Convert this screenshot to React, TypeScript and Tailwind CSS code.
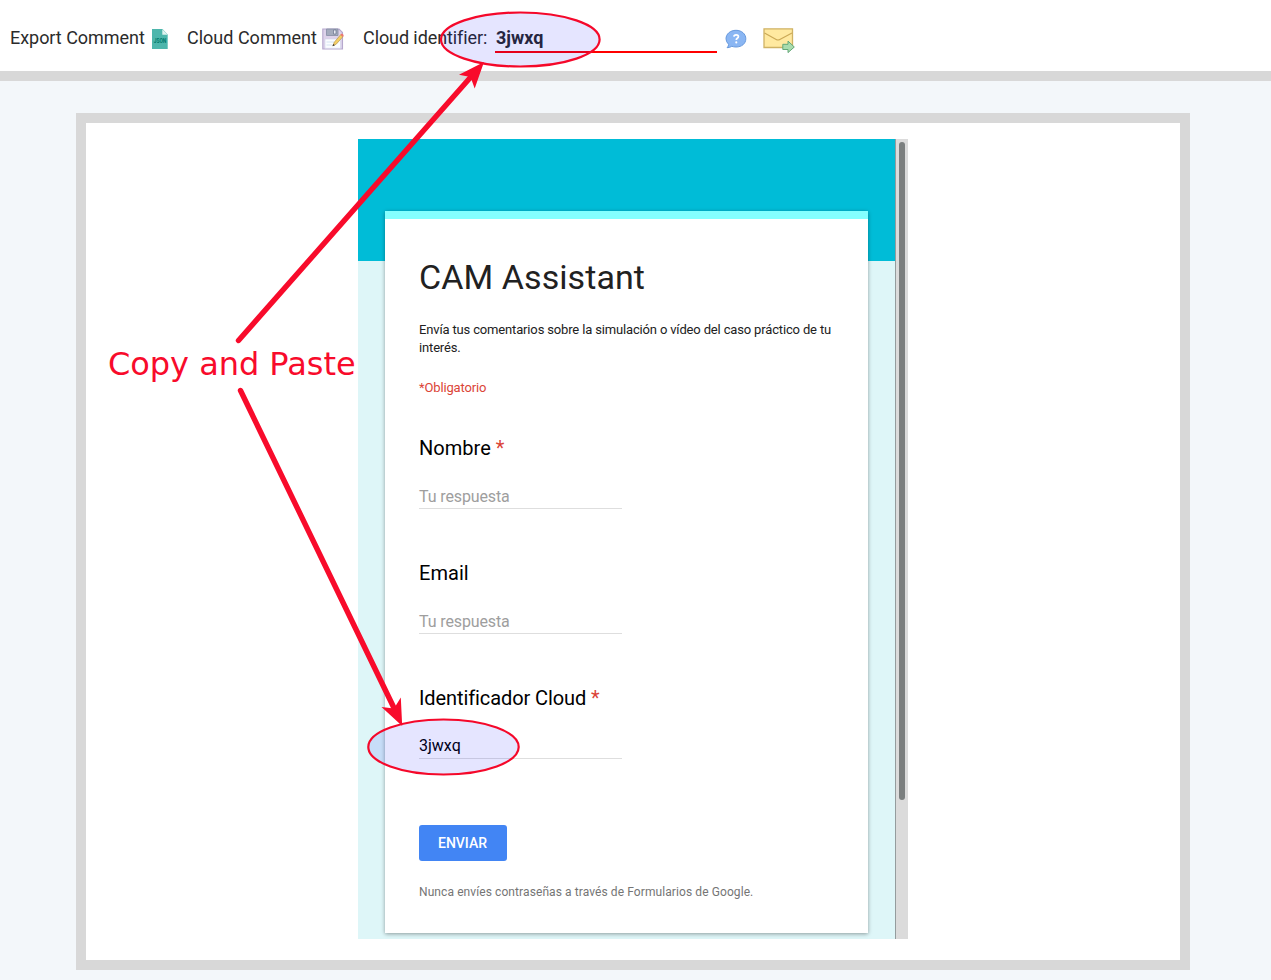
import React from "react";

function JsonFileIcon() {
  return (
    <svg className="h-5 w-4 shrink-0 overflow-visible" viewBox="0 0 16 20">
      <path d="M0 0H10.5L15.7 5.5V20H0Z" fill="#4db6ac" />
      <path d="M10.3 .3L15.7 5.7H10.3Z" fill="#dff3f0" />
      <text x="1.7" y="14" textLength="12.6" lengthAdjust="spacingAndGlyphs" fontSize="6.4" fontWeight="700" fill="#00796b" fontFamily="Roboto, sans-serif">JSON</text>
    </svg>
  );
}

function SaveEditIcon() {
  return (
    <svg className="h-[22px] w-[22px] shrink-0" viewBox="0 0 22 22">
      <path d="M.8 1H17L20.5 4.5V21H.8Z" fill="#ddd2ea" stroke="#b5a8cd" strokeWidth="1.1" />
      <path d="M4.5 1H16V7.5H4.5Z" fill="#a4abbd" stroke="#858da4" strokeWidth=".8" />
      <path d="M11.5 2H14V6H11.5Z" fill="#e8ebf3" stroke="#68718c" strokeWidth=".7" />
      <path d="M3 11H18.5V20.3H3Z" fill="#fbfdff" stroke="#d2d4e7" strokeWidth=".6" />
      <path d="M4.5 14H12M4.5 17H10" stroke="#cfe0f0" strokeWidth=".9" />
      <path d="M11 17.8L12.3 14.2L18.6 6.8L20.8 8.8L14.2 16.2Z" fill="#f5cf65" stroke="#b69750" strokeWidth=".7" />
      <path d="M18.4 6.8L19.6 5.4Q21.6 5.6 21.7 7.8L21 9Z" fill="#ee7770" />
      <path d="M10.4 18.3L11.2 15.9L12.9 17.3Z" fill="#3c3630" />
    </svg>
  );
}

function HelpBubbleIcon() {
  return (
    <svg className="h-5 w-[22px] shrink-0" viewBox="0 0 22 20">
      <path d="M11 1.3C16.8 1.3 20.8 5 20.8 9.8S16.8 18 11 18Q8.7 18 6.8 17.3Q4.7 18.8 2.1 18.7Q3.7 17.2 3.6 15.3Q1 12.8 1 9.8C1 5 5.2 1.3 11 1.3Z" fill="#8ab6f3" stroke="#6799dd" />
      <path d="M8.9 7.6Q9 5.8 11.2 5.8Q13.4 5.8 13.4 7.5Q13.4 8.6 12.3 9.3Q11.3 10 11.3 11" fill="none" stroke="#fff" strokeWidth="1.7" />
      <circle cx="11.3" cy="13.4" r="1.05" fill="#fff" />
    </svg>
  );
}

function SendMailIcon() {
  return (
    <svg className="h-[26px] w-8 shrink-0" viewBox="0 0 32 26">
      <path d="M1 1.8H29.5V20.5H1Z" fill="#ffe9a0" stroke="#cfb264" strokeWidth="1.3" />
      <path d="M1.5 6L13.2 12.5Q15 13.5 16.8 12.5L29 6" fill="none" stroke="#cba956" strokeWidth="1.2" />
      <path d="M19.8 17.3H25V14.1L31.3 20L25 25.6V22.5H19.8Z" fill="#a9dcae" stroke="#65a878" />
    </svg>
  );
}

function Toolbar() {
  return (
    <header className="flex h-[81px] items-start border-b-10 border-[#d8d8d8] bg-white pt-6 pl-2.5 text-lg leading-7 text-[#2b2b2b]">
      <span className="w-[142px] shrink-0 tracking-[-0.04px] whitespace-nowrap">Export Comment</span>
      <span className="pt-[5px]"><JsonFileIcon /></span>
      <span className="ml-[19px] w-[134.5px] shrink-0 whitespace-nowrap">Cloud Comment</span>
      <span className="pt-1"><SaveEditIcon /></span>
      <span className="ml-[19.5px] w-[132px] shrink-0 tracking-[-0.09px] whitespace-nowrap">Cloud identifier:</span>
      <span className="h-[29px] w-[222px] shrink-0 border-b-2 border-[#f00] pl-px font-bold">3jwxq</span>
      <span className="ml-2 pt-[5px]"><HelpBubbleIcon /></span>
      <span className="ml-4 pt-[3px]"><SendMailIcon /></span>
    </header>
  );
}

type FieldProps = { label: string; required?: boolean; value?: string };

function Field({ label, required, value }: FieldProps) {
  return (
    <div className="pb-[51px]">
      <div className={`h-[26px] text-xl leading-[26px] text-black ${value ? "tracking-[-0.09px]" : "tracking-[0.03px]"}`}>
        {label}
        {required && <span className="text-[#db4437]"> *</span>}
      </div>
      <div className={`mt-[23px] h-[25px] w-[203px] border-b border-[#dedede] text-base ${value ? "leading-6 text-black" : "leading-[26px] tracking-[-0.12px] text-[#9e9e9e]"}`}>
        {value ?? "Tu respuesta"}
      </div>
    </div>
  );
}

function FormCard() {
  return (
    <div className="h-[722px] w-[483px] border-t-8 border-[#84ffff] bg-white px-[34px] pt-[35px] shadow-[0_1px_4px_rgba(0,0,0,0.37)]">
      <h1 className="h-[46px] text-[34px] leading-[46px] tracking-[0.08px] text-[#212121]">CAM Assistant</h1>
      <p className="mt-[21px] text-[13px] leading-[18px] tracking-[-0.155px] whitespace-nowrap text-[#212121]">
        Envía tus comentarios sobre la simulación o vídeo del caso práctico de tu<br />interés.
      </p>
      <p className="mt-[22px] mb-[38px] text-[13px] leading-[18px] tracking-[-0.15px] text-[#db4437]">*Obligatorio</p>
      <Field label="Nombre" required />
      <Field label="Email" />
      <Field label="Identificador Cloud" required value="3jwxq" />
      <button className="mt-[15px] block h-9 w-[88px] rounded-[3px] bg-[#4285f4] pr-px text-sm font-medium text-white">ENVIAR</button>
      <p className="mt-[22px] text-xs leading-[18px] tracking-[0.09px] text-[#757575]">Nunca envíes contraseñas a través de Formularios de Google.</p>
    </div>
  );
}

function Annotations() {
  return (
    <div className="pointer-events-none absolute inset-0">
      <svg className="absolute inset-0" width="1271" height="980" viewBox="0 0 1271 980">
        <g fill="#0000ff" fillOpacity=".1" stroke="#f5082a" strokeWidth="2.2">
          <ellipse cx="520.3" cy="39.5" rx="79.3" ry="27" />
          <ellipse cx="443.5" cy="747" rx="75.2" ry="27.5" />
        </g>
        <g stroke="#f80b2b" strokeWidth="5.4" strokeLinecap="round">
          <path d="M238.5 340.5L471 76.7" />
          <path d="M240.5 390.5L394 708" />
        </g>
        <g fill="#f80b2b">
          <path d="M484 62L474.7 88.5L470.5 77L459 74.7Z" />
          <path d="M402.2 726L381.5 707L394 708.5L400.8 697.5Z" />
        </g>
      </svg>
      <div className="absolute top-[344px] left-[108px] font-['DejaVu_Sans',sans-serif] text-[32px] leading-10 tracking-[-0.04px] whitespace-nowrap text-[#f80b2b]">Copy and Paste</div>
    </div>
  );
}

export default function App() {
  return (
    <div className="relative h-[980px] w-[1271px] overflow-hidden bg-[#f3f7fa] font-[Roboto,sans-serif]">
      <Toolbar />
      <main className="mt-8 ml-[76px] flex h-[857px] w-[1114px] border-10 border-[#d8d8d8] bg-white pt-4 pl-[272px]">
        <div className="flex h-[800px] w-[550px]">
          <div className="h-full w-[537px] overflow-hidden bg-[linear-gradient(#00bcd7_122px,#def6f8_122px)] pt-[72px] pl-[27px]">
            <FormCard />
          </div>
          <div className="h-full w-[13px] border-l border-[#949c9d] bg-[#dbdbdb] pt-[3px] pl-[3px]">
            <div className="h-[658px] w-1.5 rounded-full bg-[#7b7f7f]" />
          </div>
        </div>
      </main>
      <Annotations />
    </div>
  );
}
